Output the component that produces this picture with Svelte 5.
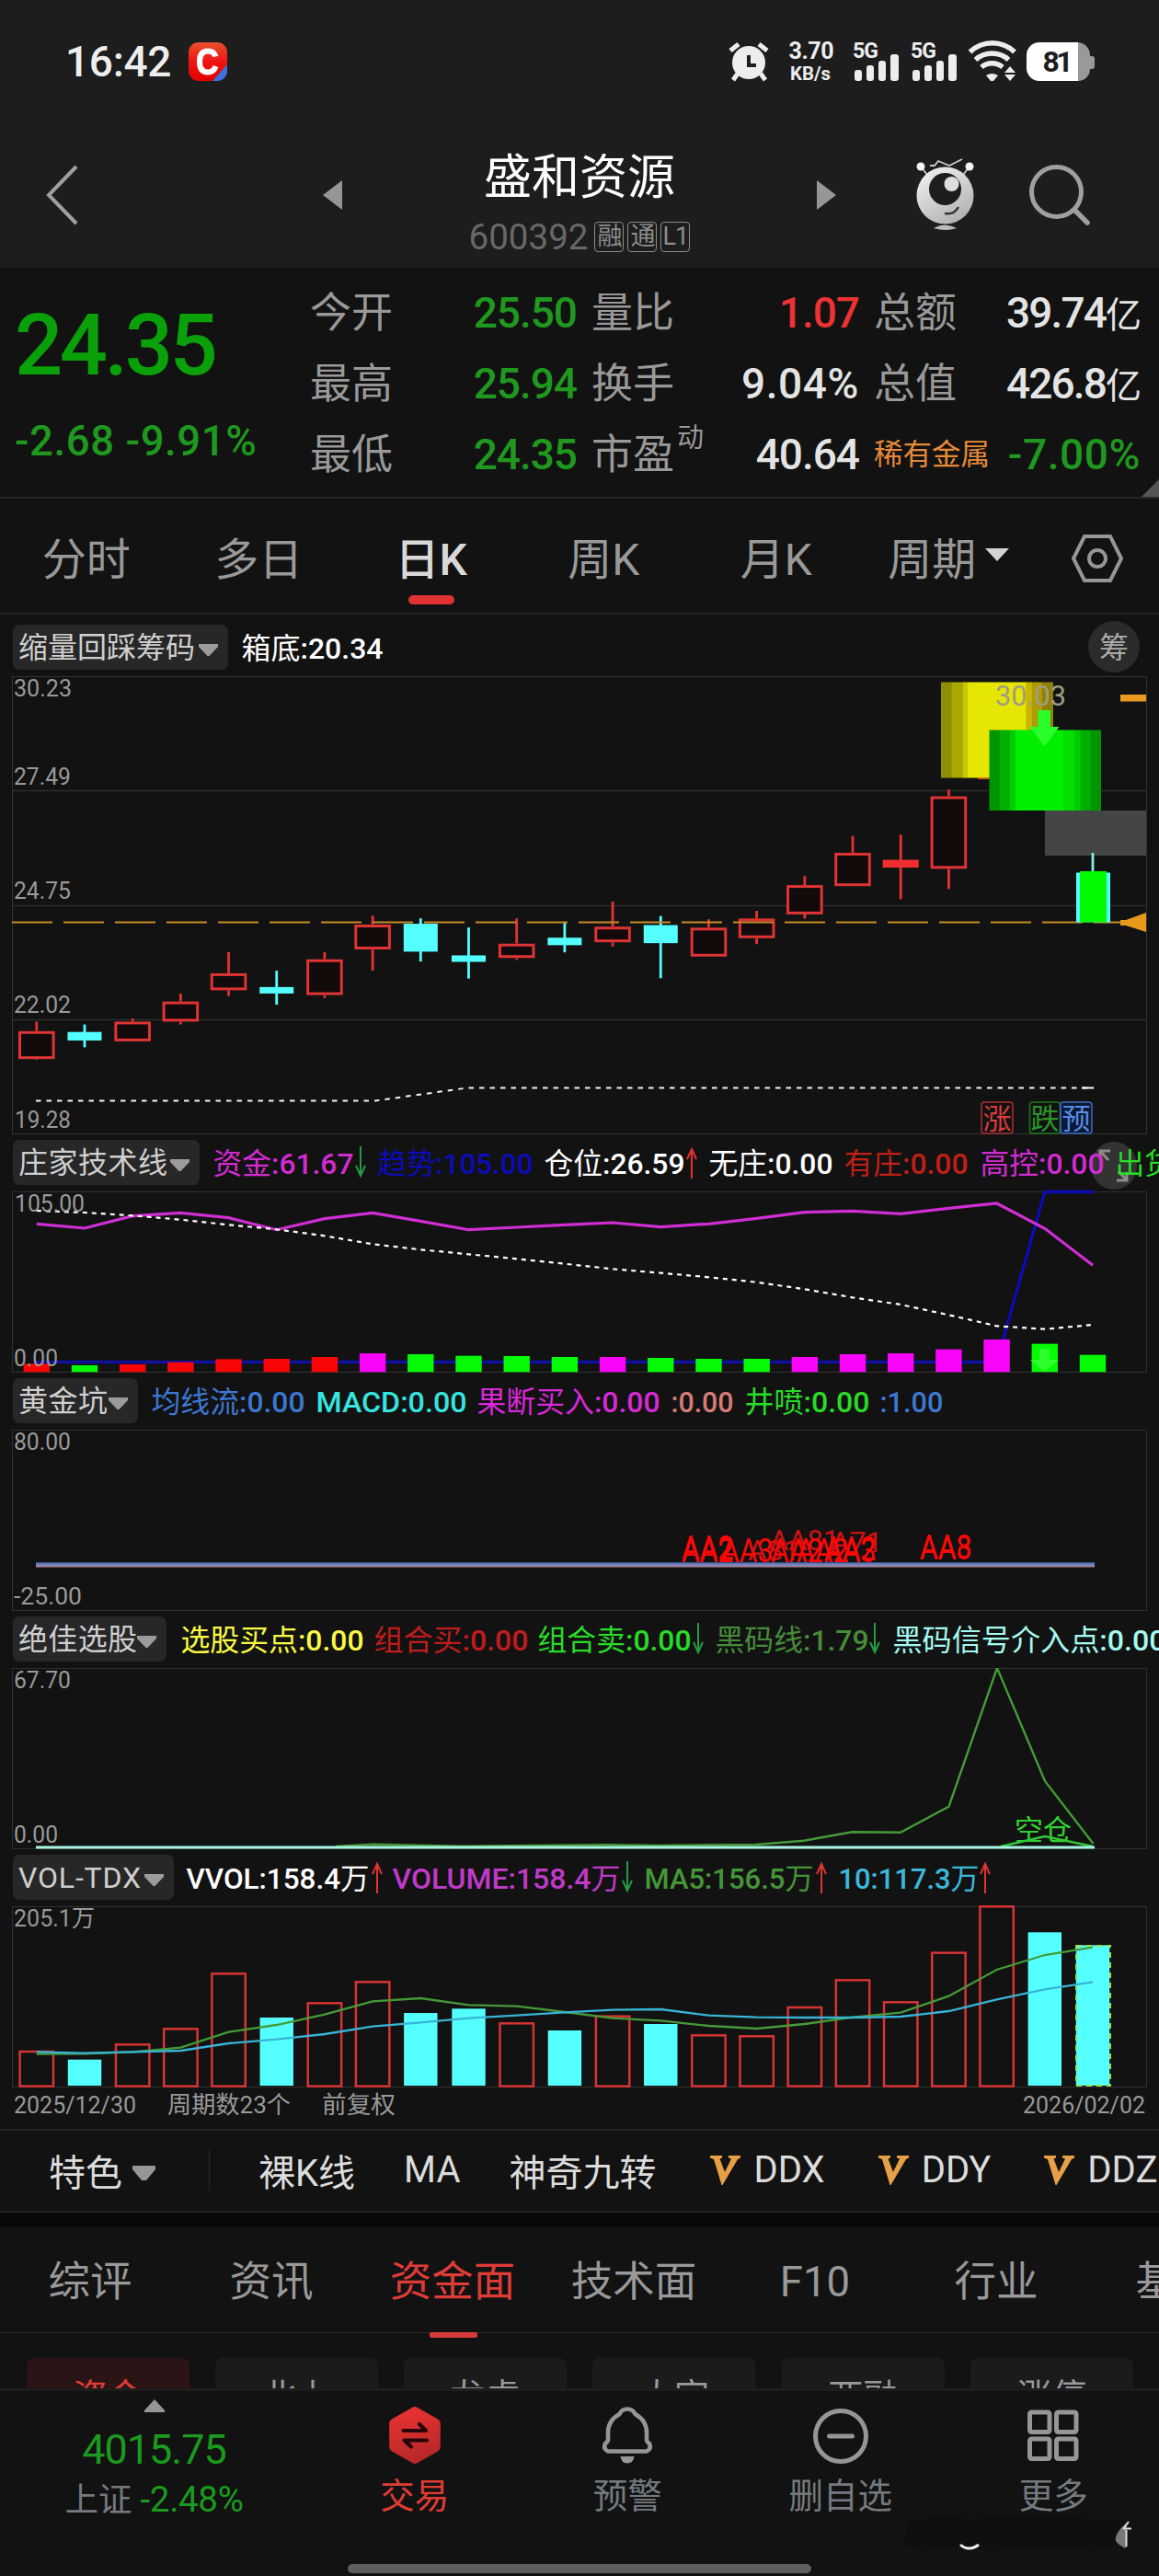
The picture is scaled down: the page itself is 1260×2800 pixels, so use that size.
<script>
  const STEP = 52.19;
  const X0 = 39.8;
  const cx = (i) => X0 + STEP * i;

  // y positions inside the price pane
  const py = (v) => 660 + v / 2.703;
  // [kind, high, top, bottom, low]
  const candles = [
    ['r', 1218, 1245, 1328, 1330], ['c', 1226, 1248, 1273, 1293], ['r', 1208, 1217, 1276, 1276],
    ['r', 1135, 1158, 1218, 1226], ['r', 1013, 1075, 1126, 1143], ['c', 1068, 1116, 1135, 1168],
    ['r', 1013, 1034, 1140, 1148], ['r', 906, 932, 1006, 1068], ['c', 914, 930, 1012, 1041],
    ['c', 941, 1023, 1042, 1091], ['r', 914, 988, 1031, 1036], ['c', 926, 971, 993, 1014],
    ['r', 865, 938, 985, 997], ['c', 907, 934, 987, 1090], ['r', 917, 941, 1027, 1027],
    ['r', 892, 914, 973, 990], ['r', 790, 816, 903, 915], ['r', 672, 721, 820, 820],
    ['f', 668, 742, 765, 858], ['r', 536, 555, 769, 828]
  ];
  const yellowBands = [
    [1023, 12, '#8f8f06'], [1034.6, 13, '#aaa904'], [1047, 6, '#c9c804'], [1052.2, 64, '#e6e604'],
    [1115.3, 7, '#c9b604'], [1121.8, 12, '#b09a06'], [1133.4, 11.6, '#8f8208']
  ];
  const greenBands = [
    [1075.5, 12, '#009600'], [1086.8, 12, '#00b000'], [1098, 7, '#00cc00'], [1104, 53, '#00ee00'],
    [1156, 12.5, '#00df00'], [1168, 7, '#00cb00'], [1174.4, 12, '#00ae00'], [1185.6, 11.4, '#009600']
  ];

  const line = (ys, base) => ys.map((v, i) => `${cx(i).toFixed(1)},${(base + v / 3).toFixed(1)}`).join(' ');
  const fund = line([301, 315, 275, 265, 281, 320, 284, 265, 292, 320, 312, 304, 297, 311, 301, 283, 263, 259, 268, 250, 234, 316, 436], 1230);
  const hold = line([258, 264, 274, 287, 304, 319, 340, 367, 385, 400, 415, 431, 448, 461, 475, 491, 514, 541, 564, 598, 634, 644, 630], 1230);
  const barTops = [757, 762, 759, 752, 742, 741, 735, 723, 726, 731, 732, 735, 735, 738, 741, 741, 735, 726, 723, 710, 678, 692, 728];
  const barKinds = 'rgrrrrrmggggmgggmmmmmgg';
  const barColors = { r: '#fa0505', g: '#05fa05', m: '#fa05fa' };

  const vols = [657, 686, 634, 583, 403, 549, 499, 430, 534, 520, 565, 591, 542, 570, 604, 607, 513, 424, 496, 335, 184, 271, 313];
  const volKinds = 'rcrrrcrrccrcrcrrrrrrrcc';
  const ma5 = line([668, 667, 661, 647, 596, 573, 539, 496, 486, 508, 512, 531, 551, 559, 576, 585, 570, 548, 533, 479, 393, 345, 320], 2010);
  const ma10 = line([661, 665, 661, 657, 633, 620, 603, 578, 565, 551, 542, 532, 524, 522, 542, 548, 549, 549, 546, 528, 490, 457, 433], 2010);

  const signals = [
    [813, 1696, 'A81', 0], [837, 1685, 'AA81', 0], [903, 1687, 'A71', 0],
    [741, 1698, 'AA2', 1], [741, 1695, 'AA2', 1], [784, 1698, 'AA3', 1],
    [838, 1698, 'AA2', 1], [866, 1698, 'AA2', 1], [896, 1698, 'AA3', 1], [896, 1696, 'AA2', 1],
    [1000, 1695, 'AA3', 1], [1000, 1694, 'AA8', 1]
  ];

  // [text, colour, x, width, arrow, arrowX]
  const p1 = { name: '缩量回踩筹码', end: 248, w: 192, items: [['箱底:20.34', '#fff', 263, 154]] };
  const p2 = { name: '庄家技术线', end: 217, w: 162, items: [
    ['资金:61.67', '#d22bd2', 232, 153, 'd', 392], ['趋势:105.00', '#0c0cb8', 411, 169], ['仓位:26.59', '#fff', 592, 153, 'u', 752],
    ['无庄:0.00', '#fff', 771, 135], ['有庄:0.00', '#c02016', 918, 135], ['高控:0.00', '#d22bd2', 1066, 135], ['出货:0.00', '#28dc28', 1213, 135]] };
  const p3 = { name: '黄金坑', end: 150, w: 97, items: [
    ['均线流:0.00', '#3c78d2', 165, 167], ['MACD:0.00', '#36e4e0', 344, 164], ['果断买入:0.00', '#d828d8', 519, 199],
    [':0.00', '#d67c78', 730, 68], ['井喷:0.00', '#28dc28', 810, 136], [':1.00', '#3c78d2', 957, 69]] };
  const p4 = { name: '绝佳选股', end: 181, w: 129, items: [
    ['选股买点:0.00', '#fafa46', 197, 199], ['组合买:0.00', '#c01c1c', 407, 168], ['组合卖:0.00', '#28dc28', 585, 167, 'd', 759],
    ['黑码线:1.79', '#468c3a', 778, 167, 'd', 951], ['黑码信号介入点:0.00', '#a4fbf0', 971, 297]] };
  const p5 = { name: 'VOL-TDX', end: 189, w: 133, items: [
    ['VVOL:158.4万', '#fff', 203, 199, 'u', 410], ['VOLUME:158.4万', '#c03ac8', 427, 248, 'd', 682],
    ['MA5:156.5万', '#459638', 701, 184, 'u', 893], ['10:117.3万', '#3cb8dc', 912, 153, 'u', 1071]] };

  // splits a label into Han and Latin runs, which carry different weights
  const runs = (t) => t.match(/[\u4e00-\u9fff]+|[^\u4e00-\u9fff]+/g);
  const isHan = (t) => t.charCodeAt(0) > 0x4dff;

  const periods = ['分时', '多日', '日K', '周K', '月K'];
  const tabs = ['综评', '资讯', '资金面', '技术面', 'F10', '行业', '基金'];
  const chips = ['资金', '北上', '龙虎', '大宗', '两融', '涨停'];
</script>

{#snippet head(p)}
  <div class="phead">
    <button class="pill" style:width="{p.end - 14}px">
      <svg width={p.end - 14} height="49" viewBox="14 0 {p.end - 14} 49">
        <text x="20" y="36" font-size="32" textLength={p.w} fill="#cfcfcf">{p.name}</text>
        <path d="M{p.end - 32} 21h21v3l-9.500 10h-2l-9.500 -10z" fill="#9b9b9b" />
      </svg>
    </button>
    <svg class="legend" width={1260 - p.end} height="62" viewBox="{p.end} 0 {1260 - p.end} 62">
      {#each p.items as [t, c, x, w, a, ax]}
        <text x={x - 0.5} y="42.500" font-size="32" textLength={w} lengthAdjust="spacingAndGlyphs" fill={c}>{#each runs(t) as r}<tspan font-weight={isHan(r) ? 400 : 500}>{r}</tspan>{/each}</text>
        {#if a === 'd'}<path d="M{ax} 13v32m-5 -11 5 11 5 -11" stroke="#269a44" stroke-width="2" fill="none" />{/if}
        {#if a === 'u'}<path d="M{ax} 48V16m-5 11 5 -11 5 11" stroke="#e03430" stroke-width="2" fill="none" />{/if}
      {/each}
    </svg>
  </div>
{/snippet}

{#snippet axis(x, y, t, w)}
  <text {x} {y} font-size="26" fill="#999" textLength={w} lengthAdjust="spacingAndGlyphs">{t}</text>
{/snippet}

{#snippet frame(y)}
  <rect x="13.500" y={y + 0.5} width="1233" height="196" fill="none" stroke="#303030" />
{/snippet}

<div class="screen">
  <header>
    <div class="status">
      <span class="time">16:42</span>
      <svg width="42" height="42" viewBox="0 0 42 42">
        <defs>
          <linearGradient id="iconFill" x1="0" y1="0" x2="0" y2="1"><stop offset="0" stop-color="#e8502c" /><stop offset=".5" stop-color="#f01414" /><stop offset="1" stop-color="#e00000" /></linearGradient>
          <clipPath id="iconClip"><rect width="42" height="42" rx="11" /></clipPath>
        </defs>
        <g clip-path="url(#iconClip)"><rect width="42" height="42" fill="url(#iconFill)" /><path d="M42 24V42H26z" fill="#3a72e0" /></g>
        <path d="M29.500 15.500C28 10.500 25 9.500 21 9.500c-6 0-9 4-9 11.500s3 11.500 9 11.500c4 0 7-2 8.500-6.500" fill="none" stroke="#fff" stroke-width="6" />
      </svg>
      <svg class="sys" width="420" height="60" viewBox="0 0 420 60" fill="#ededed">
        <circle cx="34" cy="38" r="18" />
        <path d="M34 30v11h8" stroke="#1d1d1d" stroke-width="4" fill="none" />
        <path d="M14 25 23 18M54 25 45 18" stroke="#ededed" stroke-width="5" />
        <path d="M22 50 17 57M47 50l5 7" stroke="#ededed" stroke-width="5" />
        <text x="102" y="34" font-size="25" font-weight="700" text-anchor="middle" textLength="49">3.70</text>
        <text x="101" y="57" font-size="21" font-weight="700" text-anchor="middle" textLength="44" lengthAdjust="spacingAndGlyphs">KB/s</text>
        {#each [0, 63] as dx}
          <g transform="translate({dx} 0)">
            <text x="147" y="33" font-size="23" font-weight="700" textLength="28">5G</text>
            <rect x="149" y="46" width="8" height="12" rx="3" /><rect x="162" y="41" width="8" height="17" rx="3" />
            <rect x="175" y="36" width="8" height="22" rx="3" /><rect x="188" y="29" width="9" height="29" rx="3" />
          </g>
        {/each}
        <g fill="none" stroke="#ededed" stroke-width="5.500">
          <path d="M274.500 26.500a35 35 0 0 1 48.500 0" /><path d="M280.500 35a27 27 0 0 1 36 0" /><path d="M287 43a18 18 0 0 1 23 0" />
        </g>
        <path d="M292 52q6-4 13 0l-5 6h-3z" /><path d="M318 42l6 7h-12zM312 51h12l-6 7z" />
        <path d="M385 16h6a14 14 0 0 1 14 14v1h2a3 3 0 0 1 3 3v8a3 3 0 0 1-3 3h-2a13 13 0 0 1-13 13h-7z" fill="#999" />
        <path d="M350 16h42v42h-42a14 14 0 0 1-14-14V30a14 14 0 0 1 14-14z" fill="#fff" />
        <text x="370" y="48" font-size="32" font-weight="700" text-anchor="middle" fill="#1d1d1d" textLength="33">81</text>
      </svg>
    </div>
    <div class="titlebar">
      <svg class="back" width="40" height="70" viewBox="0 0 40 70"><path d="M35 4 5 35 35 66" fill="none" stroke="#a0a0a0" stroke-width="4" /></svg>
      <svg class="prev" width="22" height="34" viewBox="0 0 22 34"><path d="M21 1v32L0 17z" fill="#969696" /></svg>
      <div class="name">
        <h1>盛和资源</h1>
        <p><span class="code">600392</span><i>融</i><i>通</i><i>L1</i></p>
      </div>
      <svg class="next" width="22" height="34" viewBox="0 0 22 34"><path d="M1 1v32l21-16z" fill="#969696" /></svg>
      <svg class="bot" width="64" height="80" viewBox="0 0 64 80">
        <defs><linearGradient id="botFill" x1="0" y1="0" x2=".6" y2="1"><stop offset="0" stop-color="#f6f6f6" /><stop offset="1" stop-color="#b4b4b4" /></linearGradient></defs>
        <path d="M5 9l7 9M58 9l-7 9M15 8h5l4-5 12 5 14-7" stroke="#ccc" stroke-width="1.800" fill="none" />
        <circle cx="5" cy="9" r="4.500" fill="#f4f4f4" /><circle cx="58" cy="9" r="4.500" fill="#f4f4f4" />
        <circle cx="31.500" cy="40.500" r="31" fill="url(#botFill)" /><circle cx="31.500" cy="33.500" r="17.500" fill="#1d1d1d" />
        <circle cx="38.500" cy="28" r="8" fill="#dedede" /><path d="M31 60q10 2 15-7" stroke="#333" stroke-width="2.500" fill="none" />
        <path d="M19 76q12-7 25 0-12 4-25 0z" fill="#bbb" />
      </svg>
      <svg class="search" width="66" height="68" viewBox="0 0 66 68"><circle cx="29.500" cy="30.500" r="27" fill="none" stroke="#a0a0a0" stroke-width="5" /><path d="M49 50l14 14" stroke="#a0a0a0" stroke-width="5.500" stroke-linecap="round" /></svg>
    </div>
  </header>

  <section class="quote">
    <div class="last"><b>24.35</b><span>-2.68 -9.91%</span></div>
    <dl>
      <dt>今开</dt><dd class="g">25.50</dd><dt>量比</dt><dd class="r">1.07</dd><dt>总额</dt><dd class="big">39.74<em>亿</em></dd>
      <dt>最高</dt><dd class="g">25.94</dd><dt>换手</dt><dd class="pct">9.04%</dd><dt>总值</dt><dd class="big">426.8<em>亿</em></dd>
      <dt>最低</dt><dd class="g">24.35</dd><dt>市盈<sup>动</sup></dt><dd>40.64</dd><dt class="ind">稀有金属</dt><dd class="g pct">-7.00%</dd>
    </dl>
    <svg class="corner" width="19" height="19" viewBox="0 0 19 19"><path d="M19 0v19H0z" fill="#555" /></svg>
  </section>

  <nav class="periods">
    {#each periods as p, i}<span class:on={i === 2}>{p}</span>{/each}
    <span>周期<svg width="26" height="15" viewBox="0 0 26 15"><path d="M0 0h26L13 14z" fill="#d4d4d4" /></svg></span>
    <span><svg width="56" height="54" viewBox="0 0 56 54" fill="none" stroke="#969696" stroke-width="4"><path d="M14 3h28l12 24-12 24H14L2 27z" /><circle cx="28" cy="27" r="9" /></svg></span>
  </nav>

  <section class="pane first">
    {@render head(p1)}
    <svg class="chip-round" width="56" height="56" viewBox="0 0 56 56"><circle cx="28" cy="28" r="28" fill="#2b2b2b" /><text x="28" y="39.500" font-size="32" text-anchor="middle" fill="#aaa">筹</text></svg>
    <svg width="1260" height="498" viewBox="0 735 1260 498">
      <g stroke="#2d2d2d" fill="none">
        <rect x="13.500" y="735.500" width="1233" height="497" stroke="#333" />
        <path d="M14 859.500H1246M14 984.500H1246M14 1108.500H1246" stroke-width="1.500" />
      </g>
      {@render axis(15, 757, '30.23', 63)}
      {@render axis(15, 853, '27.49', 62)}
      {@render axis(15, 977, '24.75', 62)}
      {@render axis(15, 1101, '22.02', 62)}
      {@render axis(16, 1226, '19.28', 61)}
      {#each candles as [k, h, t, b, l], i}
        {#if k === 'r'}
          <path d="M{cx(i)} {py(h)}V{py(t)}M{cx(i)} {py(b)}V{py(l)}" stroke="#e23434" stroke-width="2.800" />
          <rect x={cx(i) - 18.3} y={py(t) + 1.7} width="36.600" height={py(b) - py(t) - 3.4} fill="#130a0c" stroke="#de3434" stroke-width="3" />
        {:else}
          <path d="M{cx(i)} {py(h)}V{py(l)}" stroke={k === 'c' ? '#54ffff' : '#e63232'} stroke-width="2.800" />
          <rect x={cx(i) - (k === 'c' ? 18.5 : 19.5)} y={py(t)} width={k === 'c' ? 37 : 39} height={py(b) - py(t)} fill={k === 'c' ? '#54ffff' : '#f03030'} />
        {/if}
      {/each}
      <path d="M13 1002.500H1218" stroke="#c88a28" stroke-width="2" stroke-dasharray="44 12" />
      {#each yellowBands as [x, w, c]}<rect {x} y="741.500" width={w} height="104" fill={c} />{/each}
      <rect x="1063" y="845" width="14" height="2" fill="#c46a10" />
      <rect x="1136" y="881" width="110" height="49" fill="#454545" />
      {#each greenBands as [x, w, c]}<rect {x} y="793.500" width={w} height="87.500" fill={c} />{/each}
      <text x="1082" y="766.500" font-size="31" textLength="77" lengthAdjust="spacingAndGlyphs" fill="#a09c84">30.03</text>
      <path d="M1128.500 772h13.500v18h9.500l-16 21.500-16-21.500h9z" fill="#2bff2b" />
      <path d="M1188 927v22" stroke="#7ff0e8" stroke-width="2.800" />
      <rect x="1170" y="948.500" width="37" height="54" fill="#54ffff" /><rect x="1174" y="947" width="29" height="55.500" fill="#00fa00" />
      <rect x="1218" y="755" width="28" height="7.500" fill="#e89a20" />
      <path d="M1218 1000h6l22-8v21l-22-7h-6z" fill="#e8981a" />
      <path d="M39 1196.500H408L508 1182.500H1189" stroke="#f4f4f4" stroke-width="2" stroke-dasharray="5.500 6" fill="none" />
      <path d="M1176 1182.500H1189" stroke="#f4f4f4" stroke-width="2" />
      <g font-size="31" text-anchor="middle" stroke-width="1.500">
        <rect x="1067" y="1198" width="34" height="34" rx="3" fill="none" stroke="#a83030" /><text x="1084" y="1226.500" fill="#dc3c3c">涨</text>
        <rect x="1119.500" y="1198" width="33" height="34" rx="3" fill="none" stroke="#1e781e" /><text x="1136" y="1226.500" fill="#2a962a">跌</text>
        <rect x="1153" y="1198" width="34" height="34" rx="3" fill="#0b1a34" stroke="#3c6ec0" /><text x="1170" y="1226.500" fill="#5a8ce6">预</text>
      </g>
    </svg>
  </section>

  <section class="pane">
    <svg class="expand" width="50" height="54" viewBox="0 0 50 54"><ellipse cx="25" cy="27" rx="25" ry="26" fill="#333" /><path d="M10 20V11h11M11 12l8 9M39 34v9H28M38 42l-8-9" fill="none" stroke="#8c8c8c" stroke-width="3" /></svg>
    {@render head(p2)}
    <svg class="over" width="1260" height="197" viewBox="0 1295 1260 197">
      {@render frame(1295)}
      <path d="M39 1480.500H{cx(20)}" stroke="#0f0fa0" stroke-width="3.500" />
      <path d="M{cx(20)} 1480.500L{cx(21)} 1295.500" stroke="#0a0acc" stroke-width="2.800" fill="none" />
      <path d="M{cx(21) - 1} 1295.500H1189" stroke="#0c0cb4" stroke-width="3.500" />
      <polyline points={fund} fill="none" stroke="#d02ed4" stroke-width="3.200" />
      <polyline points={hold} fill="none" stroke="#fff" stroke-width="2.200" stroke-dasharray="5 5" />
      {#each barTops as t, i}<rect x={cx(i) - 14.2} y={1230 + t / 3} width="28.400" height={(784 - t) / 3} fill={barColors[barKinds[i]]} />{/each}
      <path d="M1130 1466h11v12h10l-15.500 13-15.500-13h10z" fill="#2dff2d" />
      {@render axis(16, 1317, '105.00', 76)}
      {@render axis(15, 1485, '0.00', 48)}
    </svg>
  </section>

  <section class="pane">
    {@render head(p3)}
    <svg width="1260" height="197" viewBox="0 1554 1260 197">
      {@render frame(1554)}
      <path d="M39 1701H1190" stroke="#7d82b8" stroke-width="4" /><path d="M39 1699H1190" stroke="#4a6cb4" stroke-width="1.500" /><path d="M39 1702.800H1190" stroke="#b08a9c" stroke-width="1.200" />
      {#each signals as [x, y, t, b]}
        <text {x} {y} font-size={b ? 36 : 32} fill={b ? '#fa0808' : '#cc1212'} textLength={t.length * 18.8} lengthAdjust="spacingAndGlyphs">{t}</text>
      {/each}
      {@render axis(15, 1576, '80.00', 62)}
      {@render axis(15, 1744, '-25.00', 74)}
    </svg>
  </section>

  <section class="pane">
    {@render head(p4)}
    <svg width="1260" height="197" viewBox="0 1813 1260 197">
      {@render frame(1813)}
      <polyline points="365,2007 406,2004.700 498,2006.700 659,2005.300 715,2006 822,2005 874,2000.700 926.500,1991.300 979,1991.700 1031.500,1963.700 1084,1813 1136,1936 1188.500,2004" fill="none" stroke="#459a38" stroke-width="2.400" />
      <text x="1103" y="2000" font-size="31" fill="#32d232">空仓</text>
      <path d="M1088 2007L1136 1996 1188 2007" fill="none" stroke="#32c832" stroke-width="2.500" />
      <path d="M39 2008H1190" stroke="#a8f4e4" stroke-width="3.200" />
      {@render axis(15, 1835, '67.70', 62)}
      {@render axis(15, 2003, '0.00', 48)}
    </svg>
  </section>

  <section class="pane">
    {@render head(p5)}
    <svg class="over" width="1260" height="197" viewBox="0 2072 1260 197">
      {@render frame(2072)}
      {#each vols as v, i}
        {#if volKinds[i] === 'r'}
          <rect x={cx(i) - 18.2} y={2011 + v / 3} width="36.400" height={(770 - v) / 3} fill="none" stroke="#d63434" stroke-width="2.500" />
        {:else}
          <rect x={cx(i) - 18.2} y={2010 + v / 3} width="36.400" height={(771 - v) / 3} fill="#54ffff" />
        {/if}
      {/each}
      <rect x="1170" y="2115" width="37" height="152" fill="none" stroke="#9ce04a" stroke-width="2" stroke-dasharray="6 5" />
      <polyline points={ma5} fill="none" stroke="#459a38" stroke-width="2.300" />
      <polyline points={ma10} fill="none" stroke="#38b4d4" stroke-width="2.300" />
      {@render axis(15, 2094, '205.1万', 88)}
    </svg>
    <svg width="1260" height="45" viewBox="0 2269 1260 45">
      {@render axis(15, 2297, '2025/12/30', 133)}
      {@render axis(182, 2297, '周期数23个', 134)}
      {@render axis(350, 2297, '前复权', 80)}
      {@render axis(1112, 2297, '2026/02/02', 133)}
    </svg>
  </section>

  <nav class="features">
    <span class="sel">特色<svg width="26" height="18" viewBox="0 0 26 18"><path d="M0 0h25v4L15 16h-5L0 4z" fill="#969696" /></svg></span>
    <span>裸K线</span><span>MA</span><span>神奇九转</span>
    {#each ['DDX', 'DDY', 'DDZ'] as d}
      <span class="vip"><svg width="33" height="32" viewBox="0 0 33 32"><path d="M0 0h13v2.500l-2.500 1L16 18 23 3.500 20 2.500V0h13v2.500L30 4 13.500 32h-1L4 4 0 2.500z" fill="#e8a046" /></svg>{d}</span>
    {/each}
  </nav>

  <nav class="tabs">
    {#each tabs as t, i}<span class:on={i === 2}>{t}</span>{/each}
  </nav>
  <div class="chips">
    {#each chips as c, i}<span class:on={i === 0}>{c}</span>{/each}
  </div>

  <footer>
    <div class="index">
      <svg width="22" height="14" viewBox="0 0 22 14"><path d="M11 0 22 12v2H0v-2z" fill="#969696" /></svg>
      <b>4015.75</b>
      <p>上证 <span>-2.48%</span></p>
    </div>
    <div class="act hot">
      <svg width="62" height="66" viewBox="0 0 62 66">
        <defs><linearGradient id="hexFill" x1="0" y1="0" x2=".3" y2="1"><stop offset="0" stop-color="#f03434" /><stop offset="1" stop-color="#b82828" /></linearGradient></defs>
        <path d="M28 3q3-1.800 6 0l22 12.500q2.800 1.700 2.800 5v25q0 3.300-2.800 5L34 63q-3 1.800-6 0L6 50.500q-2.800-1.700-2.800-5v-25q0-3.300 2.800-5z" fill="url(#hexFill)" />
        <path d="M18.500 28H43L36 21M44 38.500H19.500L27 45.500" fill="none" stroke="#260408" stroke-width="4.200" stroke-linecap="round" stroke-linejoin="round" />
      </svg>交易</div>
    <div class="act">
      <svg width="62" height="66" viewBox="0 0 62 66" fill="none" stroke="#969696" stroke-width="4.600" stroke-linejoin="round">
        <path d="M31 4.500q6 0 8.500 5.500Q52 17 52 30v8q0 2 3 4 2.500 6-3 8.500H10Q4.500 48 7 42q3-2 3-4v-8Q10 17 22.500 10 25 4.500 31 4.500z" /><path d="M23.500 56h15q-1 7.500-7.500 7.500T23.500 56z" fill="#969696" stroke="none" />
      </svg>预警</div>
    <div class="act">
      <svg width="62" height="66" viewBox="0 0 62 66" fill="none" stroke="#969696" stroke-width="5"><circle cx="31" cy="34" r="27.500" /><path d="M18.500 34h25" stroke-linecap="round" /></svg>删自选</div>
    <div class="act">
      <svg width="62" height="66" viewBox="0 0 62 66" fill="none" stroke="#969696" stroke-width="5"><rect x="5.500" y="8" width="21.500" height="21.500" rx="2" /><rect x="34.500" y="8" width="21.500" height="21.500" rx="2" /><rect x="5.500" y="37" width="21.500" height="21.500" rx="2" /><rect x="34.500" y="37" width="21.500" height="21.500" rx="2" /></svg>更多</div>
    <svg class="mark" width="280" height="60" viewBox="960 2725 280 60">
      <path d="M988 2740l30-4 40 2 60-4 70 4 36 2-2 24-34 8-60-4-50 4-40-4-36 4-20-6z" fill="#0d0d0d" opacity=".55" />
      <path d="M1044 2766q9 8 20 0" stroke="#eee" stroke-width="3" fill="none" />
      <path d="M1225 2742q-14 12-12 20 5 6 11 8z" fill="#777" /><path d="M1227 2741l-6 8M1222 2748.500h8M1224.500 2750v18" stroke="#ddd" stroke-width="2" fill="none" />
    </svg>
    <div class="home"></div>
  </footer>
</div>

<style>
  :global(body) { background: #121212; }
  .screen {
    width: 1260px; height: 2800px; overflow: hidden; background: #121212; color: #dcdcdc;
    font-family: Roboto, "Noto Sans CJK SC", sans-serif; display: flex; flex-direction: column;
  }
  svg { display: block; flex: none; }
  header { height: 291px; background: #1d1d1d; flex: none; }
  .status { height: 133px; display: flex; align-items: center; padding: 0 60px 0 71px; }
  .time { font-size: 46px; font-weight: 500; width: 134px; color: #eee; letter-spacing: -.3px; }
  .sys { margin: -13px 0 0 auto; }
  .titlebar { height: 158px; display: flex; align-items: center; }
  .back { margin-left: 48px; } .prev { margin-left: 263px; }
  .name { width: 494px; margin: 25px 10px 0; text-align: center; }
  .name h1 { margin: 0; font-size: 52px; line-height: 64px; font-weight: 400; color: #fff; }
  .name p { margin: 2px 0 0; display: flex; justify-content: center; align-items: center; gap: 4px; height: 60px; }
  .code { font-size: 38.500px; color: #686868; margin-right: 3px; }
  .name i { font-style: normal; font-size: 27px; line-height: 30px; width: 30px; height: 31px; border: 1.500px solid #8c8c8c; border-radius: 4px; color: #8c8c8c; letter-spacing: -1px; }
  .bot { margin-left: 87px; } .search { margin-left: 59px; }

  .quote { height: 251px; flex: none; border-bottom: 2px solid #282828; display: flex; position: relative; box-sizing: border-box; }
  .last { width: 337px; color: #0aa00a; padding: 32px 0 0 16px; box-sizing: border-box; }
  .last b { display: block; font-size: 92px; line-height: 106px; font-weight: 500; letter-spacing: -3.500px; }
  .last span { display: block; font-size: 45.500px; line-height: 54px; margin-top: 24px; letter-spacing: .6px; color: #1f981f; white-space: nowrap; font-weight: 500; }
  dl { margin: 11px 0 0; display: grid; grid-template-columns: 130px 160px 125px 182px 125px 181px; grid-auto-rows: 77px; line-height: 77px; font-size: 46px; }
  dt { color: #999; white-space: nowrap; font-size: 45px; }
  dt:nth-of-type(3n + 2), dt:nth-of-type(3n) { padding-left: 16px; }
  dt.ind { color: #e68a38; font-size: 31.500px; }
  dt sup { font-size: 29px; line-height: 0; vertical-align: 24px; margin-left: 3px; }
  dd { margin: 0; text-align: right; font-weight: 500; color: #e4e4e4; letter-spacing: -1px; white-space: nowrap; }
  dd em { font-style: normal; font-size: 39px; font-weight: 400; }
  dd.big { letter-spacing: -1.900px; padding-right: 1px; }
  dd.pct { letter-spacing: .6px; }
  dd.g { color: #1f981f; } dd.r { color: #ee3232; }
  .corner { position: absolute; right: 0; bottom: 0; }

  .periods { height: 126px; box-sizing: border-box; border-bottom: 2px solid #242424; display: grid; grid-template-columns: repeat(6, 187.500px) 135px; font-size: 48px; color: #999; flex: none; }
  .periods span { position: relative; display: flex; align-items: center; justify-content: center; gap: 10px; padding-bottom: 1px; }
  .periods span:last-child { padding: 5px 0 0; }
  .periods .on { color: #d8d8d8; font-weight: 500; }
  .periods .on::after { content: ""; position: absolute; left: 69px; bottom: 9px; width: 50px; height: 10px; border-radius: 5px; background: #e03232; }

  .pane { position: relative; flex: none; }
  .first { padding-top: 5px; }
  .phead { height: 62px; display: flex; padding-left: 14px; overflow: hidden; }
  .pill { margin: 6px 0 0; padding: 0; border: 0; height: 49px; background: #272727; border-radius: 7px; font-family: inherit; }
  .legend { position: relative; }
  .chip-round { position: absolute; left: 1183px; top: 7px; }
  .expand { position: absolute; left: 1186px; top: 7px; }
  .over { overflow: visible; }

  .features { height: 91px; box-sizing: border-box; border-top: 2px solid #242424; border-bottom: 2px solid #242424; display: flex; align-items: center; gap: 53px; font-size: 40px; color: #dcdcdc; white-space: nowrap; flex: none; padding-bottom: 2px; }
  .features span { display: flex; align-items: center; }
  .features .sel { width: 174px; height: 44px; padding-left: 53px; box-sizing: content-box; border-right: 1px solid #2c2c2c; gap: 11px; }
  .features .sel svg { margin-top: 8px; }
  .features .vip { gap: 14px; margin-left: 6px; margin-right: -1px; }

  .tabs { height: 131px; box-sizing: border-box; border-top: 16px solid #080808; border-bottom: 1px solid #2a2a2a; display: grid; grid-template-columns: repeat(7, 197px); font-size: 45.500px; color: #999; flex: none; margin-left: 0; }
  .tabs span { position: relative; text-align: center; line-height: 119px; padding-right: 1px; }
  .tabs .on { color: #de3c36; }
  .tabs .on::after { content: ""; position: absolute; left: 73px; bottom: -1px; width: 52px; height: 6px; border-radius: 2px; background: #d83a3a; }
  .chips { height: 60px; box-sizing: border-box; padding: 27px 0 0 28.500px; display: flex; gap: 28.300px; overflow: hidden; flex: none; }
  .chips span { width: 177px; height: 84px; flex: none; border-radius: 8px; background: #1b1b1b; color: #999; text-align: center; line-height: 84px; font-size: 38px; }
  .chips .on { background: #2a1416; color: #e03c36; }

  footer { height: 204px; box-sizing: border-box; border-top: 3px solid #1d1d1d; display: grid; grid-template-columns: 335px repeat(4, 231.500px); position: relative; flex: none; }
  .index { display: flex; flex-direction: column; align-items: center; padding-top: 9px; color: #1a9a1e; }
  .index b { font-weight: 400; font-size: 45px; line-height: 54px; margin-top: 14px; letter-spacing: -1px; }
  .index p { margin: 0; font-size: 36.500px; line-height: 54px; color: #757a7f; white-space: nowrap; }
  .index p span { color: #1a9a1e; letter-spacing: -.3px; font-size: 38.500px; }
  .act { display: flex; flex-direction: column; align-items: center; padding-top: 15px; font-size: 37.500px; line-height: 54px; color: #757a7f; }
  .act svg { margin-bottom: 6px; }
  .hot { color: #e03c34; }
  .mark { position: absolute; left: 960px; bottom: 15px; }
  .home { position: absolute; left: 378px; bottom: 3px; width: 504px; height: 10px; border-radius: 5px; background: #5e5e5e; }
</style>
